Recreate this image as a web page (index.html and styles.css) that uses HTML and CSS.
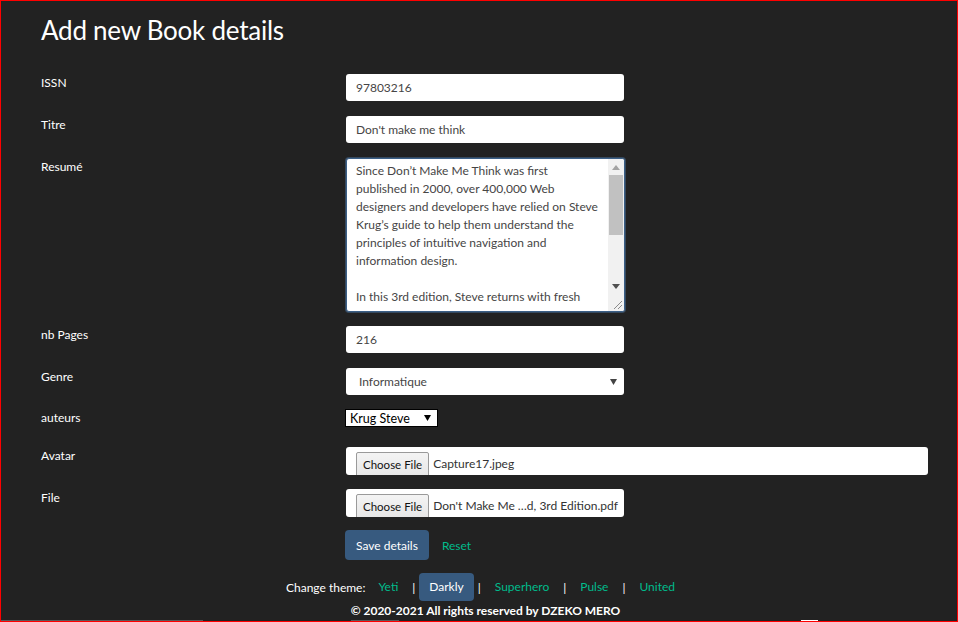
FILE: index.html
```html
<!DOCTYPE html>
<html lang="en">
<head>
<meta charset="utf-8">
<title>Add new Book details</title>
<link rel="stylesheet" href="styles.css">
</head>
<body>
<div class="page">
  <h1 class="title">Add new Book details</h1>
  <form class="form">
    <div class="row r-issn">
      <label class="lbl">ISSN</label>
      <input class="ctl" type="text" value="97803216">
    </div>
    <div class="row r-titre">
      <label class="lbl">Titre</label>
      <input class="ctl" type="text" value="Don't make me think">
    </div>
    <div class="row r-resume">
      <label class="lbl">Resumé</label>
      <div class="ta-wrap">
        <textarea class="ta">Since Don’t Make Me Think was first
published in 2000, over 400,000 Web
designers and developers have relied on Steve
Krug’s guide to help them understand the
principles of intuitive navigation and
information design.

In this 3rd edition, Steve returns with fresh</textarea>
        <div class="sbar">
          <div class="sbtn"><svg width="8" height="5" viewBox="0 0 8 5"><path d="M0 5 L4 0 L8 5 Z" fill="#a3a3a3"/></svg></div>
          <div class="strack"><div class="sthumb"></div></div>
          <div class="sbtn"><svg width="8" height="5" viewBox="0 0 8 5"><path d="M0 0 L8 0 L4 5 Z" fill="#505050"/></svg></div>
          <div class="scorner"><svg width="16" height="16" viewBox="0 0 16 16"><path d="M14 6 L6 14 M14 10 L10 14" stroke="#8a8a8a" stroke-width="1"/></svg></div>
        </div>
      </div>
    </div>
    <div class="row r-pages">
      <label class="lbl">nb Pages</label>
      <input class="ctl" type="text" value="216">
    </div>
    <div class="row r-genre">
      <label class="lbl">Genre</label>
      <div class="sel-wrap">
        <select class="ctl sel"><option>Informatique</option></select>
        <svg class="sel-arrow" width="7" height="6" viewBox="0 0 7 6"><path d="M0 0 L7 0 L3.5 6 Z" fill="#444"/></svg>
      </div>
    </div>
    <div class="row r-auteurs">
      <label class="lbl">auteurs</label>
      <div class="mini-wrap">
        <select class="mini"><option>Krug Steve</option></select>
        <svg class="mini-arrow" width="7" height="6" viewBox="0 0 7 6"><path d="M0 0 L7 0 L3.5 6 Z" fill="#000"/></svg>
      </div>
    </div>
    <div class="row r-avatar">
      <label class="lbl">Avatar</label>
      <div class="file file-wide">
        <span class="file-btn">Choose File</span>
        <span class="file-name">Capture17.jpeg</span>
      </div>
    </div>
    <div class="row r-file">
      <label class="lbl">File</label>
      <div class="file">
        <span class="file-btn">Choose File</span>
        <span class="file-name">Don't Make Me …d, 3rd Edition.pdf</span>
      </div>
    </div>
    <div class="row r-actions">
      <span class="lbl"></span>
      <div class="actions">
        <button class="btn-save" type="button">Save details</button>
        <a class="reset" href="#">Reset</a>
      </div>
    </div>
  </form>
  <div class="themes">
    <span class="themes-label">Change theme:</span>
    <a class="theme" href="#">Yeti</a>
    <span class="sep">|</span>
    <a class="theme active" href="#">Darkly</a>
    <span class="sep">|</span>
    <a class="theme" href="#">Superhero</a>
    <span class="sep">|</span>
    <a class="theme" href="#">Pulse</a>
    <span class="sep">|</span>
    <a class="theme" href="#">United</a>
  </div>
  <div class="copy">© 2020-2021 All rights reserved by DZEKO MERO</div>
  <div class="edge">
    <span class="seg seg1"></span>
    <span class="seg seg2"></span>
    <span class="seg seg3"></span>
  </div>
</div>
</body>
</html>
```
FILE: styles.css
```css
html, body {
  margin: 0;
  padding: 0;
  background: #222222;
}
body {
  font-family: Lato, "Open Sans", sans-serif;
  color: #ffffff;
}
.page {
  box-sizing: border-box;
  width: 958px;
  height: 622px;
  border: 1px solid #ff0000;
  padding: 0 27px 0 40px;
  overflow: hidden;
}
.title {
  margin: 12px 0 27px 0;
  font-size: 26px;
  letter-spacing: -0.25px;
  line-height: 34px;
  font-weight: 400;
  color: #ffffff;
}
.form {
  display: flex;
  flex-direction: column;
}
.row {
  display: flex;
  align-items: flex-start;
}
.lbl {
  flex: 0 0 305px;
  font-size: 12px;
  line-height: 17px;
  color: #ffffff;
}
.r-issn { margin-bottom: 15px; }
.r-titre { margin-bottom: 15px; }
.r-resume { margin-bottom: 14px; }
.r-pages { margin-bottom: 15px; }
.r-genre { margin-bottom: 14px; }
.r-auteurs { margin-bottom: 20px; }
.r-avatar { margin-bottom: 14px; }
.r-file { margin-bottom: 13px; }
.ctl {
  box-sizing: border-box;
  width: 278px;
  height: 27px;
  border: 0;
  border-radius: 3px;
  padding: 0 10px;
  margin: 0;
  background: #ffffff;
  font-family: Lato, sans-serif;
  font-size: 12px;
  color: #464545;
  outline: none;
}
.ta-wrap {
  position: relative;
  width: 279px;
  height: 154px;
}
.ta {
  box-sizing: border-box;
  display: block;
  width: 279px;
  height: 154px;
  margin: 0;
  border: 1px solid #3b5f86;
  border-radius: 3px;
  box-shadow: 0 0 0 1px rgba(70, 105, 145, 0.55);
  padding: 3px 20px 0 9px;
  font-family: Lato, sans-serif;
  font-size: 12px;
  line-height: 18px;
  color: #464545;
  background: #ffffff;
  resize: none;
  overflow: hidden;
  outline: none;
}
.sbar {
  position: absolute;
  top: 1px;
  right: 1px;
  bottom: 1px;
  width: 16px;
  background: #f1f1f1;
  display: flex;
  flex-direction: column;
  border-top-right-radius: 2px;
  border-bottom-right-radius: 2px;
}
.sbtn {
  height: 16px;
  flex: 0 0 16px;
  display: flex;
  align-items: center;
  justify-content: center;
}
.strack {
  flex: 1;
  padding: 0 1px;
}
.sthumb {
  height: 60px;
  background: #c1c1c1;
}
.scorner {
  height: 17px;
  flex: 0 0 17px;
  display: flex;
  align-items: flex-end;
  justify-content: flex-end;
}
.sel-wrap {
  position: relative;
  width: 278px;
  height: 27px;
}
.sel {
  appearance: none;
  -webkit-appearance: none;
  padding-left: 13px;
  display: block;
}
.sel-arrow {
  position: absolute;
  right: 7px;
  top: 11px;
}
.mini-wrap {
  position: relative;
  width: 93px;
  height: 18px;
  margin-left: -1px;
}
.mini {
  appearance: none;
  -webkit-appearance: none;
  box-sizing: border-box;
  display: block;
  width: 93px;
  height: 18px;
  margin: 0;
  border: 1px solid #000000;
  border-radius: 0;
  padding: 0 0 0 4px;
  background: #ffffff;
  font-family: Lato, sans-serif;
  font-size: 12.5px;
  color: #000000;
  outline: none;
}
.mini-arrow {
  position: absolute;
  right: 7px;
  top: 6px;
}
.file {
  box-sizing: border-box;
  width: 278px;
  height: 28px;
  background: #ffffff;
  border-radius: 3px;
  padding: 5px 10px 0 10px;
  overflow: hidden;
  display: flex;
  align-items: flex-start;
  gap: 4px;
}
.file-wide {
  width: 582px;
}
.file-btn {
  box-sizing: border-box;
  flex: none;
  height: 26px;
  padding: 0 6px;
  border: 1px solid #9a9a9a;
  border-radius: 2px;
  background: linear-gradient(#f4f4f4, #e6e6e6);
  font-size: 11.5px;
  line-height: 23px;
  color: #111111;
}
.file-name {
  font-size: 12px;
  line-height: 24px;
  color: #333333;
  white-space: nowrap;
}
.actions {
  display: flex;
  align-items: center;
  margin-left: -1px;
}
.btn-save {
  height: 30px;
  padding: 0 11px;
  border: 0;
  border-radius: 4px;
  background: #375a7f;
  color: #ffffff;
  font-family: Lato, sans-serif;
  font-size: 12px;
}
.reset {
  margin-left: 13px;
  font-size: 12px;
  color: #00bc8c;
  text-decoration: none;
}
.themes {
  margin-top: 13px;
  height: 28px;
  display: flex;
  justify-content: center;
  align-items: center;
  font-size: 12px;
}
.themes-label {
  color: #ffffff;
  margin-right: 3px;
}
.theme {
  padding: 0 10px;
  line-height: 28px;
  color: #00bc8c;
  text-decoration: none;
  border-radius: 4px;
}
.theme.active {
  background: #375a7f;
  color: #ffffff;
}
.sep {
  margin: 0 4px;
  color: #ffffff;
}
.copy {
  text-align: center;
  font-size: 12px;
  line-height: 19px;
  font-weight: 700;
  color: #ffffff;
}
.edge {
  display: flex;
  height: 1px;
  margin-left: -40px;
}
.seg {
  display: block;
  height: 1px;
}
.seg1 { width: 202px; background: #5a5a5a; }
.seg2 { width: 48px; margin-left: 148px; background: #5a5a5a; }
.seg3 { width: 17px; margin-left: 402px; background: #ffffff; }
```
